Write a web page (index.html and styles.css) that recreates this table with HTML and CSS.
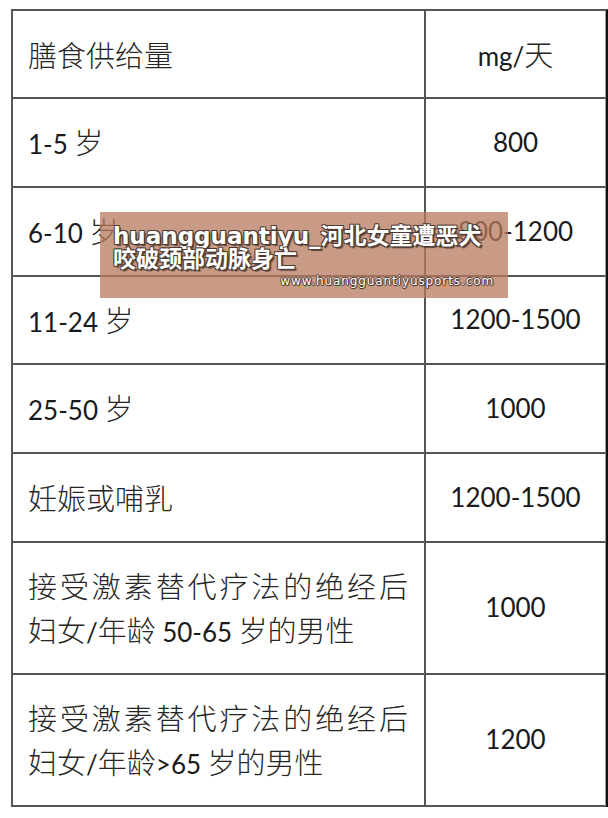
FILE: index.html
```html
<!DOCTYPE html>
<html lang="zh-CN">
<head>
<meta charset="utf-8">
<title>膳食供给量</title>
<link rel="stylesheet" href="styles.css">
</head>
<body>
<div class="page">
  <div class="sheet">
    <div class="cell label"><span class="txt">膳食供给量</span></div>
    <div class="cell value"><span class="txt"><span class="num">mg/</span>天</span></div>

    <div class="cell label"><span class="txt"><span class="num">1-5</span> 岁</span></div>
    <div class="cell value"><span class="num">800</span></div>

    <div class="cell label"><span class="txt"><span class="num">6-10</span> 岁</span></div>
    <div class="cell value"><span class="num">800-1200</span></div>

    <div class="cell label"><span class="txt"><span class="num">11-24</span> 岁</span></div>
    <div class="cell value"><span class="num">1200-1500</span></div>

    <div class="cell label"><span class="txt"><span class="num">25-50</span> 岁</span></div>
    <div class="cell value"><span class="num">1000</span></div>

    <div class="cell label"><span class="txt">妊娠或哺乳</span></div>
    <div class="cell value"><span class="num">1200-1500</span></div>

    <div class="cell label two">
      <div class="line-full">接受激素替代疗法的绝经后</div>
      <div class="line">妇女<span class="num">/</span>年龄 <span class="num">50-65</span> 岁的男性</div>
    </div>
    <div class="cell value"><span class="num">1000</span></div>

    <div class="cell label two">
      <div class="line-full">接受激素替代疗法的绝经后</div>
      <div class="line">妇女<span class="num">/</span>年龄<span class="num">&gt;65</span> 岁的男性</div>
    </div>
    <div class="cell value"><span class="num">1200</span></div>
  </div>

  <div class="banner">
    <div class="banner-title">huangguantiyu_河北女童遭恶犬<br>咬破颈部动脉身亡</div>
    <div class="banner-url">www.huangguantiyusports.com</div>
  </div>
</div>
</body>
</html>
```

FILE: styles.css
```css
html, body {
  margin: 0;
  padding: 0;
  background: #ffffff;
}

.page {
  position: relative;
  width: 608px;
  height: 818px;
  overflow: hidden;
  padding-top: 9px;
  box-sizing: border-box;
}

.sheet {
  margin-left: 11px;
  width: 597px;
  box-sizing: border-box;
  display: grid;
  grid-template-columns: 413px 1fr;
  grid-template-rows: 88px 89px 89px 88px 89px 89px 132px 132px;
  border-top: 2px solid #555555;
  border-left: 2px solid #555555;
  border-right: 2px solid #111111;
  font-family: "Noto Sans CJK SC", sans-serif;
  font-weight: 300;
  font-size: 29px;
  color: #262626;
}

.cell {
  box-sizing: border-box;
  border-bottom: 2px solid #555555;
  display: flex;
  align-items: center;
  line-height: 1.2;
}

.label {
  border-right: 2px solid #555555;
  padding: 0 16px 0 15px;
}

.value {
  border-right: 1px solid #a0a0a0;
  justify-content: center;
}

.txt {
  white-space: pre;
}

.num {
  font-family: Lato, "Liberation Sans", sans-serif;
  font-weight: 400;
  font-size: 26px;
  color: #1a1a1a;
}

.two {
  flex-direction: column;
  align-items: stretch;
  justify-content: center;
  line-height: 44px;
}

.line-full {
  text-align: justify;
  text-align-last: justify;
}

.line {
  text-align: left;
}

.banner {
  position: absolute;
  left: 100px;
  top: 212px;
  width: 408px;
  height: 86px;
  box-sizing: border-box;
  padding: 13px 14px 0 13px;
  background: rgba(183, 122, 94, 0.75);
  color: #ffffff;
}

.banner-title {
  font-family: "DejaVu Sans", "Noto Sans CJK SC", sans-serif;
  font-weight: 700;
  font-size: 23px;
  line-height: 23px;
  white-space: nowrap;
  text-shadow: -1px -1px 0 #4d3b33, 1px -1px 0 #4d3b33, -1px 1px 0 #4d3b33, 1px 1px 0 #4d3b33, 2px 2px 1px rgba(0, 0, 0, 0.55);
}

.banner-url {
  text-align: right;
  margin-top: 2px;
  font-family: "DejaVu Sans", sans-serif;
  font-size: 12px;
  line-height: 16px;
  letter-spacing: 0.9px;
  white-space: nowrap;
  text-shadow: -1px 0 0 #4d3b33, 1px 0 0 #4d3b33, 0 -1px 0 #4d3b33, 0 1px 0 #4d3b33, 1px 1px 1px rgba(0, 0, 0, 0.5);
}
```
